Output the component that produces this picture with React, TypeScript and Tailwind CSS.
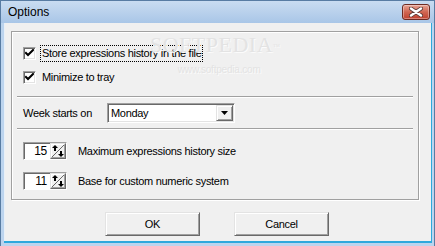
import type { ReactNode } from "react";

function CheckBox({ label, focused }: { label: string; focused?: boolean }) {
  return (
    <div className="flex h-[18px] items-center">
      <span className="flex h-[13px] w-[13px] items-center justify-center border border-[#a0a0a0] border-b-white border-r-white bg-white shadow-[inset_1px_1px_0_#696969,inset_-1px_-1px_0_#e3e3e3]">
        <svg width="9" height="9" viewBox="0 0 9 9">
          <path d="M1 4 L3 6 L8 1" fill="none" stroke="#000" strokeWidth="2" strokeLinecap="square" />
        </svg>
      </span>
      <span
        className={
          focused
            ? "ml-[4px] border border-dotted border-black px-[1px] leading-[15px]"
            : "ml-[4px] border border-transparent px-[1px] leading-[15px]"
        }
      >
        {label}
      </span>
    </div>
  );
}

function Raised({ className, children }: { className: string; children?: ReactNode }) {
  return (
    <div
      className={`flex items-center justify-center border border-[#e3e3e3] border-b-[#696969] border-r-[#696969] bg-[#f0f0f0] shadow-[inset_1px_1px_0_#fff,inset_-1px_-1px_0_#a0a0a0] ${className}`}
    >
      {children}
    </div>
  );
}

function SpinEdit({ value, label }: { value: string; label: string }) {
  return (
    <div className="flex items-center">
      <div className="flex h-[18px] w-[44px] border border-[#a0a0a0] border-b-white border-r-white bg-white shadow-[inset_1px_1px_0_#696969]">
        <span className="flex-1 pr-[3px] pt-[1px] text-right text-[12px] leading-[15px]">{value}</span>
        <Raised className="h-[16px] w-[16px]">
          <svg width="14" height="14" viewBox="0 0 14 14">
            <path d="M0.5 13.5 L13.5 0.5" stroke="#696969" strokeWidth="1" />
            <path d="M1 4 L4 1 L7 4 Z" fill="#000" />
            <rect x="3" y="3" width="2" height="4" fill="#000" />
            <rect x="9" y="7" width="2" height="3" fill="#000" />
            <path d="M7 10 L13 10 L10 13 Z" fill="#000" />
          </svg>
        </Raised>
      </div>
      <span className="ml-[11px]">{label}</span>
    </div>
  );
}

function Separator() {
  return <div className="mx-[5px] h-[2px] border-t border-[#a0a0a0] border-b border-b-white" />;
}

export default function App() {
  return (
    <div className="flex h-[246px] w-[435px] flex-col overflow-hidden border-l border-r border-t border-[#587ca3] bg-[#bcd4ee] font-['Liberation_Sans',Arial,sans-serif] text-[11px] tracking-[-0.3px] text-black">
      <div className="flex h-[22px] shrink-0 items-center justify-between bg-gradient-to-b from-[#c9dcf1] to-[#a9c6e7] pl-[7px] pr-[4px]">
        <span className="text-[12px] tracking-normal">Options</span>
        <div className="flex h-[16px] w-[28px] items-center justify-center rounded-[3px] border border-[#6e2b22] bg-gradient-to-b from-[#e7a394] via-[#d06652] to-[#c0402f] shadow-[inset_0_0_0_1px_rgba(255,255,255,0.35)]">
          <svg width="14" height="10" viewBox="0 0 14 10">
            <path d="M2 1.5 L12 8.5 M12 1.5 L2 8.5" stroke="#5a3a36" strokeWidth="4" strokeLinecap="round" />
            <path d="M2 1.5 L12 8.5 M12 1.5 L2 8.5" stroke="#fff" strokeWidth="2.4" strokeLinecap="round" />
          </svg>
        </div>
      </div>
      <div className="flex flex-1 pb-[3px] pl-[3px] pr-[2px]">
        <div className="flex flex-1 flex-col border-b-2 border-r border-[#2fa8dc] bg-[#f0f0f0] shadow-[inset_1px_0_0_#e8f0f8]">
          <div className="relative ml-[7px] mt-[8px] flex h-[169px] w-[408px] flex-col border border-[#a0a0a0] shadow-[inset_1px_1px_0_#fff,1px_1px_0_#fff]">
            <div className="pointer-events-none absolute left-[138px] top-[2px] flex flex-col items-center text-[#e3e3e3] [text-shadow:1px_1px_0_#fbfbfb]">
              <span className="font-['Liberation_Serif',serif] text-[22px] leading-[22px] tracking-[0.5px]">
                SOFTPEDIA<sup className="text-[7px]">™</sup>
              </span>
              <span className="ml-[8px] mt-[8px] text-[10px] leading-[11px] tracking-[-0.2px]">www.softpedia.com</span>
            </div>
            <div className="flex flex-col gap-[6px] pl-[11px] pt-[12px]">
              <CheckBox label="Store expressions history in the file" focused />
              <CheckBox label="Minimize to tray" />
            </div>
            <div className="mt-[10px]">
              <Separator />
            </div>
            <div className="flex items-center py-[5px] pl-[11px]">
              <span>Week starts on</span>
              <div className="ml-[15px] flex h-[20px] w-[128px] items-center border border-[#a0a0a0] border-b-white border-r-white bg-white shadow-[inset_1px_1px_0_#696969,inset_-1px_-1px_0_#e3e3e3]">
                <span className="flex-1 pl-[3px]">Monday</span>
                <Raised className="mr-[1px] h-[16px] w-[17px]">
                  <svg width="7" height="4" viewBox="0 0 7 4">
                    <path d="M0 0 L7 0 L3.5 4 Z" fill="#000" />
                  </svg>
                </Raised>
              </div>
            </div>
            <Separator />
            <div className="flex flex-col gap-[12px] pl-[11px] pt-[12px]">
              <SpinEdit value="15" label="Maximum expressions history size" />
              <SpinEdit value="11" label="Base for custom numeric system" />
            </div>
          </div>
          <div className="mt-[12px] flex justify-center gap-[34px] pr-[1px]">
            <Raised className="h-[24px] w-[95px]">OK</Raised>
            <Raised className="h-[24px] w-[95px]">Cancel</Raised>
          </div>
        </div>
      </div>
    </div>
  );
}
